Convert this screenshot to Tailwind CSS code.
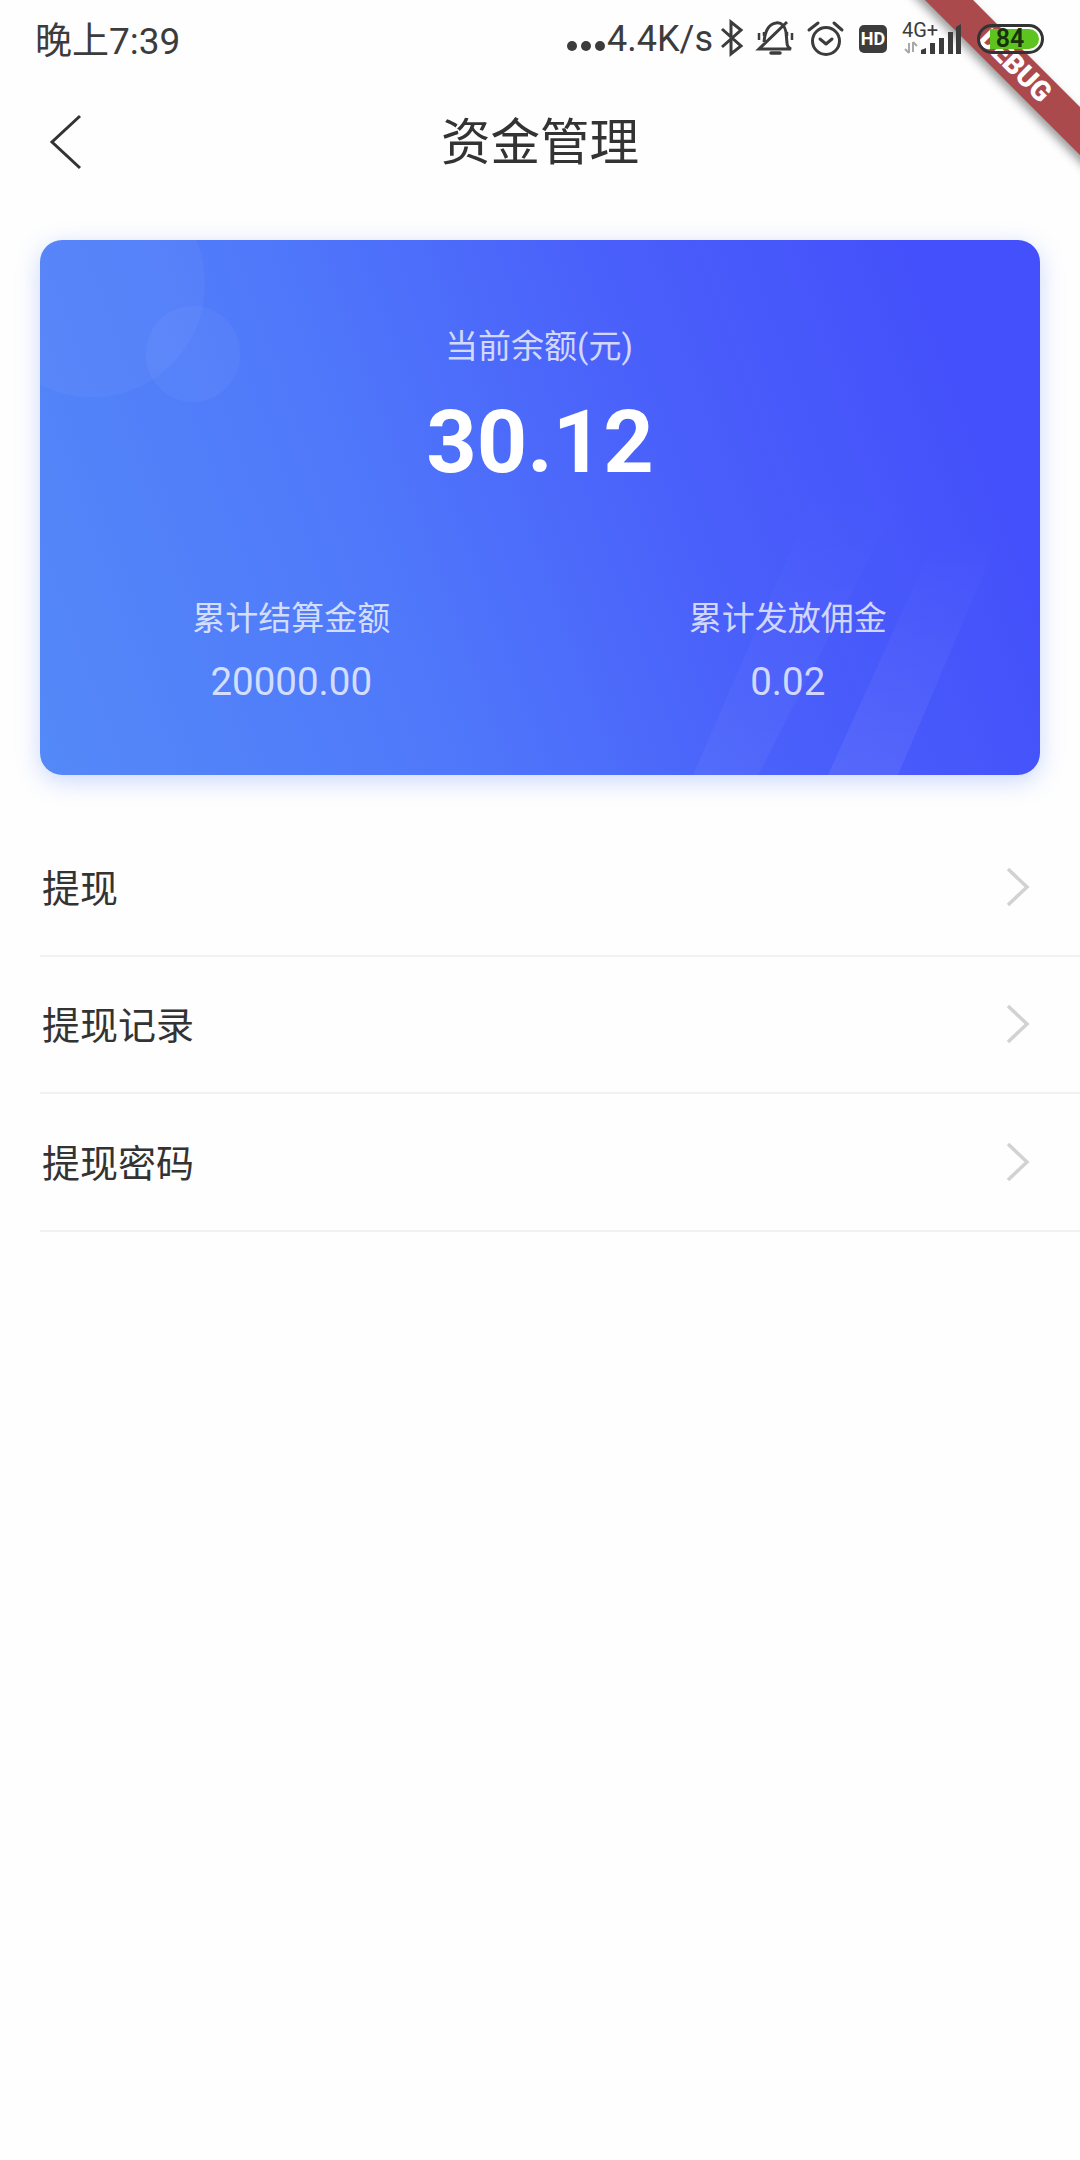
<!DOCTYPE html>
<html lang="zh-CN">
<head>
    <meta charset="UTF-8">
    <meta name="viewport" content="width=device-width, initial-scale=1.0">
    <title>资金管理</title>
    <script src="https://cdn.jsdelivr.net/npm/@tailwindcss/browser@4"></script>
</head>
<body class="bg-[#fefefe]">
<div class="relative w-[1080px] h-[2160px] overflow-hidden bg-[#fefefe] text-[#333] font-['Roboto','Noto_Sans_CJK_SC',sans-serif]">

    <!--debug ribbon, sits under the status bar-->
    <div class="absolute left-[865px] top-[49px] w-[300px] h-[34px] rotate-45 bg-[#aa4a4c] shadow-[0_5px_10px_rgba(0,0,0,0.4)] flex items-center justify-center text-white text-[28px] font-black leading-none">DEBUG</div>

    <!--status bar-->
    <div class="relative h-[80px] pl-[35px] flex items-center text-[#3c3c3c]">
        <span class="w-[146px] mt-[2px] text-[37px] leading-none">晚上7:39</span>
        <div class="flex items-center ml-[386px] mt-[-2px]">
            <div class="flex gap-[4px] mt-[14px] w-[40px]">
                <span class="w-[10px] h-[10px] rounded-full bg-[#3c3c3c]"></span>
                <span class="w-[10px] h-[10px] rounded-full bg-[#3c3c3c]"></span>
                <span class="w-[10px] h-[10px] rounded-full bg-[#3c3c3c]"></span>
            </div>
            <span class="text-[36px] leading-none w-[114px]">4.4K/s</span>
        </div>
        <svg class="shrink-0 mt-[-3px]" width="132" height="40" viewBox="0 0 132 40" fill="none" stroke="#3c3c3c" stroke-width="3">
            <path d="M1 10 L20 27 L10 35 L10 3 L20 11 L1 28"/>
            <path d="M43 23 C44 12 48 5 55 4 C61 3 64 8 65 13 L66 24 C66 27 68 29 70 30 L38 30 L66 3"/>
            <path d="M38 14v7M43 13v4M66 13v4M71 14v7" stroke-width="2.5"/>
            <path d="M50 34h9" stroke-width="3.5" stroke-linecap="round"/>
            <circle cx="105" cy="22" r="13.5"/>
            <path d="M88 11 L97 4 M113 4 L121 11" stroke-linecap="round"/>
            <path d="M99 20 L105 25 L111 20" stroke-linecap="round" stroke-linejoin="round"/>
        </svg>
        <span class="shrink-0 w-[28px] h-[28px] ml-[6px] mt-[-3px] rounded-[5px] bg-[#3c3c3c] text-white text-[18px] font-bold leading-[28px] text-center">HD</span>
        <div class="relative shrink-0 w-[60px] h-[30px] ml-[15px] mt-[-3px]">
            <span class="absolute left-0 top-[-3px] text-[20px] leading-[18px]">4G+</span>
            <svg class="absolute left-0 top-0" width="60" height="30" viewBox="0 0 60 30" fill="none">
                <path d="M7 29V19M7 29L3 25M11 18V28M11 18L15 22" stroke="#a8a8a8" stroke-width="2"/>
                <path d="M19 30V26L24 24V30ZM28 30V19H33V30ZM37 30V14H42V30ZM46 30V8H51V30ZM54 30V3L59 0V30Z" fill="#3c3c3c"/>
            </svg>
        </div>
        <!--battery-->
        <div class="relative shrink-0 w-[67px] h-[30px] ml-[15px] mt-[-3px] rounded-full border-[3px] border-[#333]">
            <div class="absolute left-[10px] right-[2px] top-[2px] bottom-[2px] bg-[#5fc31f] rounded-r-full"></div>
            <span class="absolute left-[11px] top-0 w-[38px] h-[24px] text-center text-[25px] leading-[24px] font-semibold text-[#17330b]">84</span>
        </div>
    </div>

    <!--app bar-->
    <div class="relative h-[124px] flex items-center justify-center">
        <svg class="absolute left-[48px] top-[34px]" width="36" height="56" viewBox="0 0 36 56" fill="none" stroke="#333" stroke-width="3">
            <path d="M32 2 L4 28 L32 54"/>
        </svg>
        <h1 class="mt-[3px] text-[49.5px] leading-none font-normal text-[#333]">资金管理</h1>
    </div>

    <!--balance card-->
    <div class="relative mx-[40px] mt-[36px] h-[535px] rounded-[22px] shadow-[0_6px_24px_rgba(70,120,250,0.28)] bg-[linear-gradient(70deg,#5489f8_0%,#4f78fa_35%,#4a60fa_62%,#4450fb_90%)]">
        <div class="absolute inset-0 rounded-[22px] overflow-hidden">
            <div class="absolute left-[-61px] top-[-69px] w-[226px] h-[226px] rounded-full bg-white/[0.035]"></div>
            <div class="absolute left-[106px] top-[66px] w-[94px] h-[96px] rounded-full bg-white/[0.04]"></div>
            <svg class="absolute left-0 top-0" width="1000" height="535" viewBox="0 0 1000 535" fill="none">
                <defs>
                    <linearGradient id="stripe" x1="0" y1="1" x2="0" y2="0">
                        <stop offset="0" stop-color="#fff" stop-opacity="0.07"/>
                        <stop offset="1" stop-color="#fff" stop-opacity="0"/>
                    </linearGradient>
                </defs>
                <path d="M653 535 L780 243 L868 243 L718 535 Z" fill="url(#stripe)" opacity="0.6"/>
                <path d="M788 535 L897 295 L960 295 L858 535 Z" fill="url(#stripe)"/>
            </svg>
        </div>

        <div class="relative pt-[85px] text-center text-white">
            <p class="pr-[2px] text-[33px] leading-[44px] text-white/75">当前余额(元)</p>
            <p class="mt-[23px] text-[88px] leading-[100px] font-bold">30.12</p>
            <div class="grid grid-cols-2 pl-[3px] pr-[4px] mt-[105px] text-white/75">
                <div>
                    <p class="text-[33px] leading-[44px]">累计结算金额</p>
                    <p class="mt-[19px] text-[38.5px] leading-[44px]">20000.00</p>
                </div>
                <div>
                    <p class="text-[33px] leading-[44px]">累计发放佣金</p>
                    <p class="mt-[19px] text-[38.5px] leading-[44px]">0.02</p>
                </div>
            </div>
        </div>
    </div>

    <!--menu-->
    <div class="mt-[44px] ml-[40px]">
        <div class="h-[137.5px] flex items-center justify-between pl-[2px] pr-[50px] border-b-2 border-[#f1f1f1]">
            <span class="mt-[5px] text-[38px]">提现</span>
            <svg width="24" height="40" viewBox="0 0 24 40" fill="none" stroke="#d2d2d2" stroke-width="3.5"><path d="M2 2 L21 20 L2 38"/></svg>
        </div>
        <div class="h-[137.5px] flex items-center justify-between pl-[2px] pr-[50px] border-b-2 border-[#f1f1f1]">
            <span class="mt-[5px] text-[38px]">提现记录</span>
            <svg width="24" height="40" viewBox="0 0 24 40" fill="none" stroke="#d2d2d2" stroke-width="3.5"><path d="M2 2 L21 20 L2 38"/></svg>
        </div>
        <div class="h-[137.5px] flex items-center justify-between pl-[2px] pr-[50px] border-b-2 border-[#f1f1f1]">
            <span class="mt-[5px] text-[38px]">提现密码</span>
            <svg width="24" height="40" viewBox="0 0 24 40" fill="none" stroke="#d2d2d2" stroke-width="3.5"><path d="M2 2 L21 20 L2 38"/></svg>
        </div>
    </div>
</div>
</body>
</html>
